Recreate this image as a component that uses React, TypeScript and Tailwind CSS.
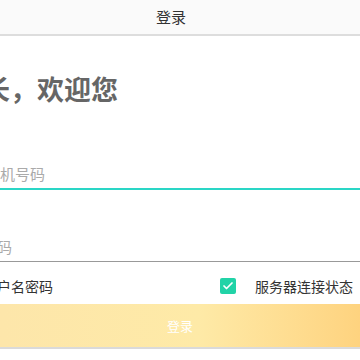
import { Check } from "lucide-react";

const font = { fontFamily: '"Noto Sans CJK SC", "Noto Sans", sans-serif' };

function Box({ checked }: { checked: boolean }) {
  return (
    <span
      className={
        checked
          ? "flex h-[16px] w-[16px] shrink-0 items-center justify-center rounded-[2px] bg-[#21d3a7]"
          : "flex h-[16px] w-[16px] shrink-0 rounded-[2px] border border-[#bbb] bg-white"
      }
    >
      {checked && <Check className="h-[12px] w-[12px] text-white" strokeWidth={3.5} />}
    </span>
  );
}

export default function App() {
  return (
    <div className="h-[360px] w-[360px] overflow-hidden bg-white" style={font}>
      <header className="flex h-[36px] items-center justify-center border-b-2 border-[#dddddd] bg-[#fafafa] pr-[18px] text-[15px] text-[#333]">
        登录
      </header>

      <h1 className="-ml-[44px] mt-[37px] whitespace-nowrap text-[27px] font-bold leading-[32px] text-[#666]">
        站长，欢迎您
      </h1>

      <div className="mt-[53px] border-b-2 border-[#2ad6c6]">
        <input
          className="-ml-[15px] h-[30px] w-[375px] bg-transparent text-[15px] text-[#333] outline-none placeholder:text-[#aaaaaa]"
          placeholder="手机号码"
        />
      </div>

      <div className="mt-[41px] border-b border-[#999]">
        <input
          type="password"
          className="-ml-[18px] h-[30px] w-[378px] bg-transparent text-[15px] text-[#333] outline-none placeholder:text-[#aaaaaa]"
          placeholder="密码"
        />
      </div>

      <div className="mt-[14px] flex h-[20px] items-center justify-between pr-[7px] text-[14px] text-[#333]">
        <label className="-ml-[69px] flex items-center gap-[8px] whitespace-nowrap">
          <Box checked={false} />
          记住用户名密码
        </label>
        <label className="flex items-center gap-[19px] whitespace-nowrap">
          <Box checked />
          服务器连接状态
        </label>
      </div>

      <button className="mt-[8px] flex h-[43px] w-full items-center justify-center bg-linear-to-r from-[#fde6aa] via-[#feeaa7] via-55% to-[#fed37f] text-[13px] text-white shadow-[0_2px_0_#dadada]">
        登录
      </button>
    </div>
  );
}
